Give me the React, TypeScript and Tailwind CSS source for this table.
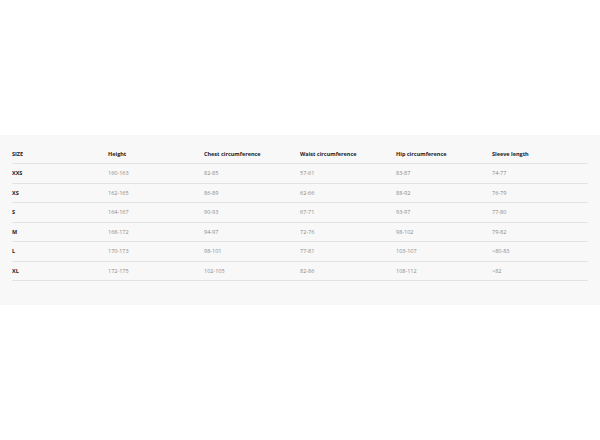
const headers = ["SIZE", "Height", "Chest circumference", "Waist circumference", "Hip circumference", "Sleeve length"];
const rows = [
  ["XXS", "160-163", "82-85", "57-61", "83-87", "74-77"],
  ["XS", "162-165", "86-89", "62-66", "88-92", "76-79"],
  ["S", "164-167", "90-93", "67-71", "93-97", "77-80"],
  ["M", "168-172", "94-97", "72-76", "98-102", "79-82"],
  ["L", "170-173", "98-101", "77-81", "103-107", ">80-83"],
  ["XL", "172-175", "102-105", "82-86", "108-112", ">82"],
];

export default function App() {
  return (
    <div className="w-[600px] h-[440px] bg-white pt-[135px]" style={{ fontFamily: '"Open Sans", "Liberation Sans", sans-serif' }}>
      <div className="h-[170px] bg-[#f8f8f8] px-[12px] pt-[10px]">
        <div className="grid grid-cols-6 h-[19px] items-center border-b border-[#e3e3e3] text-[5.5px] font-bold text-[#222]">
          {headers.map((h) => (
            <div key={h}>{h}</div>
          ))}
        </div>
        {rows.map((r) => (
          <div key={r[0]} className="grid grid-cols-6 h-[19.5px] items-center border-b border-[#e3e3e3] text-[5.5px] text-[#888]">
            {r.map((c, i) => (
              <div key={i} className={i === 0 ? "font-bold text-[#222]" : ""}>{c}</div>
            ))}
          </div>
        ))}
      </div>
    </div>
  );
}
